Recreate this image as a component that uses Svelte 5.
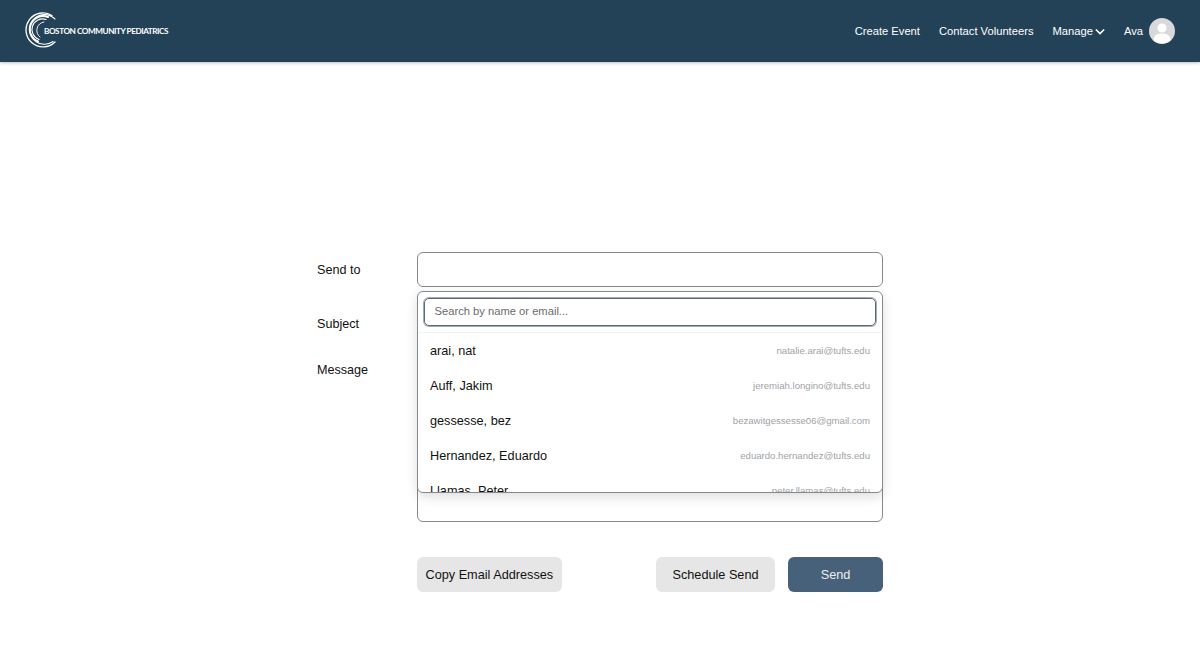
<script>
    let contacts = [
        { name: "arai, nat", email: "natalie.arai@tufts.edu" },
        { name: "Auff, Jakim", email: "jeremiah.longino@tufts.edu" },
        { name: "gessesse, bez", email: "bezawitgessesse06@gmail.com" },
        { name: "Hernandez, Eduardo", email: "eduardo.hernandez@tufts.edu" },
        { name: "Llamas, Peter", email: "peter.llamas@tufts.edu" }
    ]
</script>

<header class="navbar">
    <div class="brand">
        <svg class="logo-mark" viewBox="0 0 36 36" width="36" height="36" fill="none" stroke="#fff" stroke-linecap="round">
            <path d="M27 3.5 A17 17 0 1 0 30 30" stroke-width="1.3" />
            <path d="M30 7 A14.8 14.8 0 1 0 28 29.5" stroke-width="1.1" />
            <path d="M23 5 A13 13 0 0 0 13 29.5" stroke-width="2" />
            <path d="M21 7.5 A10.5 10.5 0 0 0 14 27.5" stroke-width="1.1" />
            <path d="M19 10 A8.5 8.5 0 0 0 15 25" stroke-width="0.9" />
        </svg>
        <span class="brand-name">BOSTON COMMUNITY PEDIATRICS</span>
    </div>
    <nav class="links">
        <span>Create Event</span>
        <span>Contact Volunteers</span>
        <span class="manage">Manage
            <svg viewBox="0 0 12 8" width="10" height="7" fill="none" stroke="#fff" stroke-width="1.8"><path d="M1 1.5 L6 6.5 L11 1.5" /></svg>
        </span>
        <span class="user">Ava
            <svg class="avatar" viewBox="0 0 26 26" width="26" height="26">
                <circle cx="13" cy="13" r="13" fill="#d9d9dc" />
                <circle cx="13" cy="10" r="4.6" fill="#fff" />
                <path d="M4.5 22 C5 16.5 9 15.5 13 15.5 C17 15.5 21 16.5 21.5 22 C19 24.5 16 25.5 13 25.5 C10 25.5 7 24.5 4.5 22 Z" fill="#fff" />
            </svg>
        </span>
    </nav>
</header>

<main class="page">
    <form class="email-form">
        <div class="row send-row">
            <span class="label">Send to</span>
            <div class="field-wrap">
                <div class="field"></div>
                <div class="dropdown">
                    <div class="search-area">
                        <div class="search">Search by name or email...</div>
                    </div>
                    <ul class="list">
                        {#each contacts as c}
                            <li>
                                <span class="name">{c.name}</span>
                                <span class="email">{c.email}</span>
                            </li>
                        {/each}
                    </ul>
                </div>
            </div>
        </div>
        <div class="row subject-row">
            <span class="label">Subject</span>
            <div class="field"></div>
        </div>
        <div class="row message-row">
            <span class="label">Message</span>
            <div class="field message"></div>
        </div>
        <div class="actions">
            <button type="button" class="btn">Copy Email Addresses</button>
            <div class="right">
                <button type="button" class="btn schedule">Schedule Send</button>
                <button type="button" class="btn send">Send</button>
            </div>
        </div>
    </form>
</main>

<style>
    :global(body){
        background-color: #fff;
        font-family: "Liberation Sans", Arial, sans-serif;
    }
    .navbar{
        height: 62px;
        background-color: #234257;
        box-shadow: 0 1px 3px rgba(0, 0, 0, 0.25);
        display: flex;
        align-items: center;
        justify-content: space-between;
        padding: 0 25px;
        color: #fff;
    }
    .brand{
        display: flex;
        align-items: center;
    }
    .logo-mark{
        margin-bottom: 3px;
    }
    .brand-name{
        font-family: Lato, sans-serif;
        font-size: 8.2px;
        font-weight: 700;
        letter-spacing: -0.45px;
        margin-left: -17px;
        margin-bottom: 1px;
    }
    .links{
        display: flex;
        align-items: center;
        gap: 19px;
        font-size: 11.2px;
    }
    .manage{
        display: flex;
        align-items: center;
        gap: 2px;
    }
    .manage svg{
        margin-top: 1px;
    }
    .user{
        display: flex;
        align-items: center;
        gap: 6px;
    }
    .page{
        padding-top: 190px;
        display: flex;
        justify-content: center;
    }
    .email-form{
        width: 566px;
    }
    .row{
        display: flex;
    }
    .label{
        width: 100px;
        font-size: 12.6px;
        line-height: 37px;
        height: 35px;
        color: #111;
    }
    .field-wrap{
        position: relative;
        width: 466px;
    }
    .field{
        box-sizing: border-box;
        width: 466px;
        height: 35px;
        border: 1px solid #85898c;
        border-radius: 6px;
    }
    .subject-row{
        margin-top: 19px;
    }
    .message-row{
        margin-top: 11px;
    }
    .message{
        height: 170px;
    }
    .dropdown{
        position: absolute;
        top: 39px;
        left: 0;
        box-sizing: border-box;
        width: 466px;
        height: 202px;
        background-color: #fff;
        border: 1px solid #85898c;
        border-radius: 6px;
        box-shadow: 0 4px 12px rgba(0, 0, 0, 0.13);
        overflow: hidden;
    }
    .search-area{
        padding: 6px 6px 6px;
        border-bottom: 1px solid #f2f2f2;
    }
    .search{
        box-sizing: border-box;
        height: 28px;
        line-height: 25px;
        border: 1px solid #5d6b78;
        box-shadow: 0 0 0 1px #a3acb4;
        border-radius: 5px;
        padding: 0 9.5px;
        font-size: 11.2px;
        color: #6c6c6c;
    }
    .list{
        list-style: none;
        margin: 0;
        padding: 0;
    }
    .list li{
        height: 35px;
        display: flex;
        align-items: center;
        justify-content: space-between;
        padding: 0 12px;
    }
    .name{
        font-size: 12.7px;
        color: #111;
    }
    .email{
        font-size: 9.6px;
        color: #a0a4a8;
    }
    .actions{
        display: flex;
        justify-content: space-between;
        margin: 35px 0 0 100px;
    }
    .right{
        display: flex;
        gap: 13px;
    }
    .btn{
        height: 35px;
        border: none;
        border-radius: 6px;
        background-color: #e6e6e6;
        font-family: inherit;
        font-size: 12.7px;
        color: #111;
        padding: 0 8.5px;
    }
    .schedule{
        width: 119px;
    }
    .send{
        width: 95px;
        background-color: #47617a;
        color: #eee;
    }
</style>
